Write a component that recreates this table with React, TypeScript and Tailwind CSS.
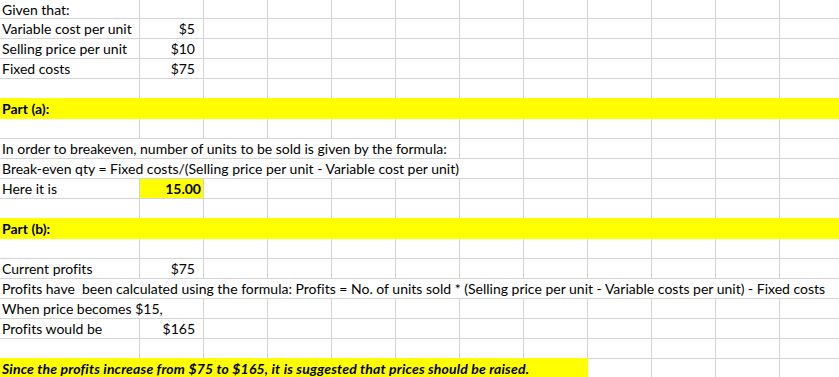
import React from 'react';

type Row = {
  a?: string;
  b?: string;
  span?: number;
  fill?: 'full' | 'part';
  bold?: boolean;
  italic?: boolean;
  bHighlight?: boolean;
};

const rows: Row[] = [
  { a: 'Given that:' },
  { a: 'Variable cost per unit', b: '$5' },
  { a: 'Selling price per unit', b: '$10' },
  { a: 'Fixed costs', b: '$75' },
  {},
  { a: 'Part (a):', span: 12, fill: 'full', bold: true },
  {},
  { a: 'In order to breakeven, number of units to be sold is given by the formula:', span: 6 },
  { a: 'Break-even qty = Fixed costs/(Selling price per unit - Variable cost per unit)', span: 7 },
  { a: 'Here it is', b: '15.00', bHighlight: true },
  {},
  { a: 'Part (b):', span: 12, fill: 'full', bold: true },
  {},
  { a: 'Current profits', b: '$75' },
  {
    a: 'Profits have\u00a0\u00a0been calculated using the formula: Profits = No. of units sold * (Selling price per unit - Variable costs per unit) - Fixed costs',
    span: 12,
  },
  { a: 'When price becomes $15,', span: 2 },
  { a: 'Profits would be', b: '$165' },
  {},
  {
    a: 'Since the profits increase from $75 to $165, it is suggested that prices should be raised.',
    span: 8,
    fill: 'part',
    bold: true,
    italic: true,
  },
];

const spanClass: Record<number, string> = {
  1: 'col-span-1',
  2: 'col-span-2',
  6: 'col-span-6',
  7: 'col-span-7',
  8: 'col-span-8',
  12: 'col-span-12',
};

const cellBase = 'border-r border-b border-[#d4d4d4] flex items-center overflow-visible whitespace-nowrap';

function SheetRow({ row, first }: { row: Row; first: boolean }) {
  const span = row.span ?? 1;
  const height = first ? 'h-[19px]' : 'h-[20px]';
  const cells: React.ReactNode[] = [];

  const filled = row.fill !== undefined;
  cells.push(
    <div
      key="a"
      className={`${cellBase} ${height} ${spanClass[span]} pl-[2px] ${
        filled ? 'bg-[#ffff00] border-[#ffff00] shadow-[0_-1px_0_#ffff00]' : ''
      } ${row.bold ? 'font-bold' : ''} ${row.italic ? 'italic tracking-[0.17px]' : ''}`}
    >
      {row.a}
    </div>
  );

  let used = span;
  if (span === 1) {
    cells.push(
      <div
        key="b"
        className={`${cellBase} ${height} justify-end ${
          row.bHighlight ? 'bg-[#ffff00] font-bold pr-[2px]' : 'pr-[8px]'
        }`}
      >
        {row.b}
      </div>
    );
    used = 2;
  }
  for (let i = used; i < 12; i++) {
    cells.push(<div key={i} className={`${cellBase} ${height}`} />);
  }
  return <>{cells}</>;
}

export default function App() {
  return (
    <div className="h-[377px] w-[839px] overflow-hidden bg-white">
      <div
        className="grid w-[844px] grid-cols-[140px_repeat(11,64px)] text-[14px] text-black [font-variant-ligatures:none]"
        style={{ fontFamily: 'Lato, "Liberation Sans", sans-serif' }}
      >
        {rows.map((row, i) => (
          <SheetRow key={i} row={row} first={i === 0} />
        ))}
      </div>
    </div>
  );
}
